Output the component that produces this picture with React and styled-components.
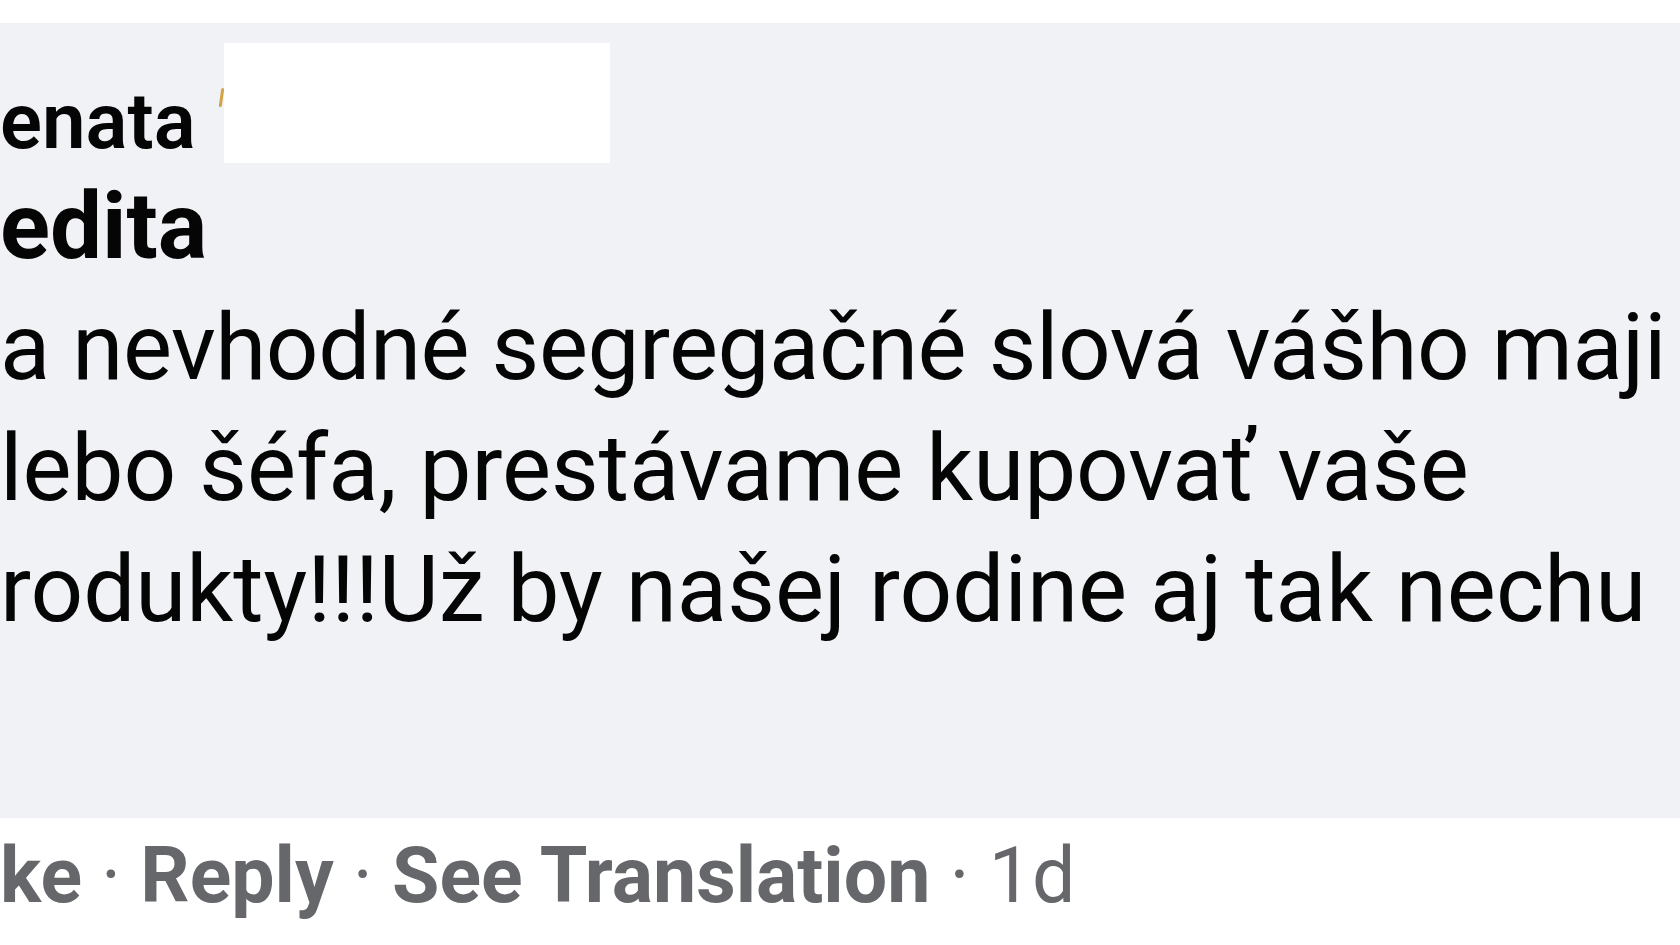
import React from "react";
import styled, { createGlobalStyle } from "styled-components";

const GlobalStyle = createGlobalStyle`
  html, body {
    margin: 0;
    padding: 0;
    background: #ffffff;
  }
  body {
    font-family: Roboto, "Liberation Sans", Arial, sans-serif;
    color: #050505;
    overflow: hidden;
  }
`;

const Page = styled.div`
  width: 1680px;
  height: 945px;
  box-sizing: border-box;
  padding-top: 23px;
  overflow: hidden;
  background: #ffffff;
`;

const Bubble = styled.div`
  height: 795px;
  box-sizing: border-box;
  padding-top: 20px;
  background: #f0f2f5;
  overflow: hidden;
`;

const NameRow = styled.div`
  display: flex;
  align-items: flex-end;
  height: 120px;
`;

const AuthorName = styled.span`
  font-size: 78px;
  font-weight: 600;
  line-height: 82px;
  white-space: nowrap;
  color: #050505;
`;

const Tick = styled.span`
  align-self: flex-start;
  margin-top: 45px;
  margin-left: 24px;
  width: 3px;
  height: 19px;
  border-radius: 2px;
  background: #d2a347;
  transform: skewX(-8deg);
`;

const Redaction = styled.span`
  align-self: stretch;
  width: 386px;
  margin-left: 1px;
  background: #ffffff;
`;

const Message = styled.div`
  margin-top: 3px;
  font-size: 92.5px;
  font-weight: 400;
  line-height: 121px;
  white-space: nowrap;
  color: #050505;
`;

const Line = styled.div`
  letter-spacing: ${(p) => p.$tracking || 0}px;
`;

const Mention = styled.span`
  font-weight: 700;
`;

const Actions = styled.div`
  margin-top: 8px;
  font-size: 77px;
  line-height: 100px;
  white-space: nowrap;
  color: #65676b;
`;

const Action = styled.span`
  font-weight: 700;
`;

const Sep = styled.span`
  font-weight: 400;
`;

const Time = styled.span`
  font-weight: 400;
`;

const lines = [
  { text: "a nevhodné segregačné slová vášho maji", tracking: -0.45 },
  { text: "lebo šéfa, prestávame kupovať vaše", tracking: 0 },
  { text: "rodukty!!!Už by našej rodine aj tak nechu", tracking: 0 },
];

const actions = ["ke", "Reply", "See Translation"];

export default function App() {
  return (
    <>
      <GlobalStyle />
      <Page>
        <Bubble>
          <NameRow>
            <AuthorName>enata</AuthorName>
            <Tick />
            <Redaction />
          </NameRow>
          <Message>
            <Line>
              <Mention>edita</Mention>
            </Line>
            {lines.map((l) => (
              <Line key={l.text} $tracking={l.tracking}>
                {l.text}
              </Line>
            ))}
          </Message>
        </Bubble>
        <Actions>
          {actions.map((a) => (
            <React.Fragment key={a}>
              <Action>{a}</Action>
              <Sep> · </Sep>
            </React.Fragment>
          ))}
          <Time>1d</Time>
        </Actions>
      </Page>
    </>
  );
}
